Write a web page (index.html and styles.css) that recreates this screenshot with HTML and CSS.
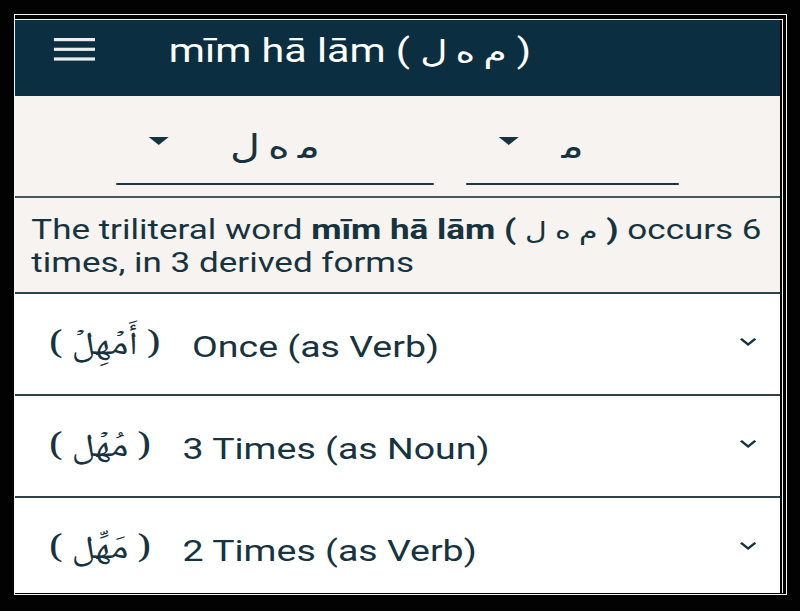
FILE: index.html
```html
<!DOCTYPE html>
<html lang="en">
<head>
<meta charset="utf-8">
<title>mīm hā lām</title>
<link rel="stylesheet" href="styles.css">
</head>
<body>
<div class="frame">
  <div class="bezel">
    <div class="viewport">
      <div class="app">
        <header class="toolbar">
          <svg class="menu" width="33" height="23" viewBox="0 0 33 23" aria-hidden="true">
            <rect x="0" y="0" width="33" height="3.2" fill="#ececec"/>
            <rect x="0" y="9.7" width="33" height="3.2" fill="#ececec"/>
            <rect x="0" y="19.4" width="33" height="3.2" fill="#ececec"/>
          </svg>
          <h1 class="title">mīm hā lām ( <span class="ar">م ه ل</span> )</h1>
        </header>

        <section class="pickers">
          <div class="picker picker-wide">
            <span class="caret"></span>
            <span class="picker-text ar" dir="rtl">م‍ ه ل</span>
          </div>
          <div class="picker picker-narrow">
            <span class="caret"></span>
            <span class="picker-text ar" dir="rtl">م‍</span>
          </div>
        </section>

        <section class="summary">
          <p>The triliteral word <b>mīm hā lām ( <span class="ar">م ه ل</span> )</b> occurs 6<br>times, in 3 derived forms</p>
        </section>

        <ul class="forms">
          <li class="form">
            <span class="form-ar" dir="rtl">( أَمۡهِلۡ )</span>
            <span class="form-label">Once (as Verb)</span>
            <svg class="chev" width="13" height="8" viewBox="6 8.59 12 7.41" preserveAspectRatio="none" aria-hidden="true"><path d="M16.59 8.59L12 13.17 7.41 8.59 6 10l6 6 6-6z" fill="#173340"/></svg>
          </li>
          <li class="form">
            <span class="form-ar" dir="rtl">( مُهۡل )</span>
            <span class="form-label">3 Times (as Noun)</span>
            <svg class="chev" width="13" height="8" viewBox="6 8.59 12 7.41" preserveAspectRatio="none" aria-hidden="true"><path d="M16.59 8.59L12 13.17 7.41 8.59 6 10l6 6 6-6z" fill="#173340"/></svg>
          </li>
          <li class="form">
            <span class="form-ar" dir="rtl">( مَهِّل )</span>
            <span class="form-label">2 Times (as Verb)</span>
            <svg class="chev" width="13" height="8" viewBox="6 8.59 12 7.41" preserveAspectRatio="none" aria-hidden="true"><path d="M16.59 8.59L12 13.17 7.41 8.59 6 10l6 6 6-6z" fill="#173340"/></svg>
          </li>
        </ul>
      </div>
    </div>
  </div>
</div>
</body>
</html>
```

FILE: styles.css
```css
* { box-sizing: border-box; }

html, body {
  margin: 0;
  padding: 0;
  background: #020202;
  height: 100%;
  overflow: hidden;
}

.frame {
  margin: 14px 0 0 14px;
  width: 773px;
  border: 1px solid #f4f4f4;
  padding: 4px 2px 1px 0;
  background: #020202;
}

.bezel {
  width: 768px;
  border-top: 1px solid #f4f4f4;
  border-right: 1px solid #f4f4f4;
  padding-right: 2px;
}

.viewport {
  width: 765px;
  height: 573px;
  overflow: hidden;
  background: #fff;
}

.app {
  width: 612px;
  transform: scaleX(1.25);
  transform-origin: 0 0;
  font-family: Roboto, "Liberation Sans", sans-serif;
  color: #173340;
}

.ar {
  font-family: "DejaVu Sans", sans-serif;
}

/* toolbar */
.toolbar {
  height: 76px;
  background: #0b2f40;
  display: flex;
  align-items: flex-start;
  padding: 11px 0 0 31px;
}

.menu {
  display: block;
  margin-top: 7px;
  flex: none;
}

.title {
  margin: 0 0 0 59px;
  font-weight: 400;
  font-size: 33px;
  line-height: 40px;
  color: #ffffff;
  white-space: nowrap;
}

.title .ar {
  font-size: 30px;
  word-spacing: -3px;
}

/* pickers */
.pickers {
  height: 102px;
  background: #f6f3f0;
  border-bottom: 2px solid #45565d;
  display: flex;
  justify-content: center;
  gap: 26px;
  padding-top: 26px;
}

.picker {
  height: 63px;
  display: grid;
  grid-template-areas: "cell";
  align-items: start;
  border-bottom: 2px solid #1c3440;
}

.picker-wide { width: 254px; }
.picker-narrow { width: 170px; }

.caret {
  grid-area: cell;
  justify-self: start;
  margin: 15px 0 0 26px;
  width: 0;
  height: 0;
  border-left: 8px solid transparent;
  border-right: 8px solid transparent;
  border-top: 8px solid #173340;
}

.picker-text {
  grid-area: cell;
  justify-self: center;
  font-size: 33px;
  line-height: 50px;
  word-spacing: -4px;
  color: #173340;
}

/* summary */
.summary {
  height: 96px;
  background: #f6f3f0;
  border-bottom: 2px solid #2f434c;
  padding: 16px 13px 0 13px;
}

.summary p {
  margin: 0;
  font-size: 28px;
  line-height: 32px;
  white-space: nowrap;
}

.summary b {
  font-weight: 700;
}

.summary .ar {
  font-size: 24px;
  font-weight: 400;
  word-spacing: -1px;
}

/* forms list */
.forms {
  list-style: none;
  margin: 0;
  padding: 0;
  background: #fff;
}

.form {
  height: 102px;
  border-bottom: 2px solid #2f434c;
  display: flex;
  align-items: center;
  gap: 25px;
  padding: 5px 19px 0 27px;
}

.form-ar {
  font-family: "Noto Naskh Arabic", "DejaVu Sans", sans-serif;
  font-size: 32px;
  white-space: nowrap;
}

.form-label {
  font-size: 30px;
  white-space: nowrap;
}

.chev {
  display: block;
  margin-left: auto;
  margin-bottom: 10px;
  flex: none;
}
```
